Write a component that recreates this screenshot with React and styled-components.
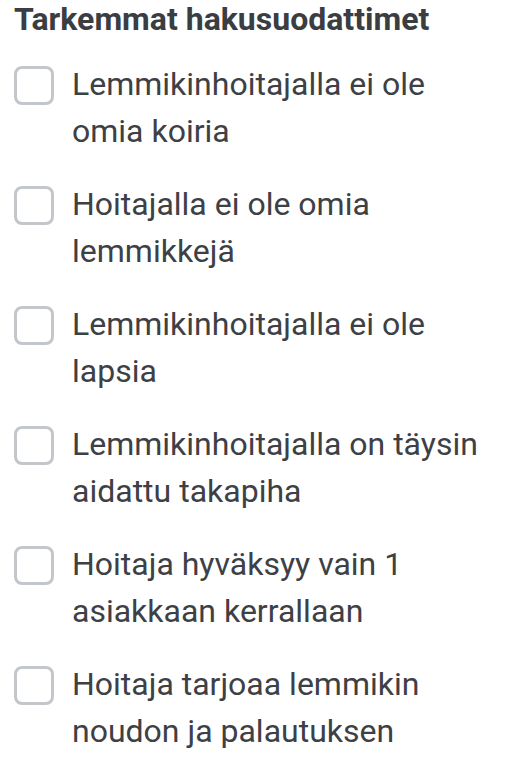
import React, { useState } from "react";
import styled, { createGlobalStyle } from "styled-components";

const filters = [
  { id: "noDogs", label: "Lemmikinhoitajalla ei ole omia koiria" },
  { id: "noPets", label: "Hoitajalla ei ole omia lemmikkejä" },
  { id: "noKids", label: "Lemmikinhoitajalla ei ole lapsia" },
  { id: "fencedYard", label: "Lemmikinhoitajalla on täysin aidattu takapiha" },
  { id: "oneClient", label: "Hoitaja hyväksyy vain 1 asiakkaan kerrallaan" },
  { id: "pickup", label: "Hoitaja tarjoaa lemmikin noudon ja palautuksen" },
];

const App = () => {
  const [checked, setChecked] = useState({});

  const toggle = (id) => setChecked({ ...checked, [id]: !checked[id] });

  return (
    <>
      <GlobalStyle />
      <Panel>
        <Title>Tarkemmat hakusuodattimet</Title>
        <List>
          {filters.map((f) => (
            <Item key={f.id} onClick={() => toggle(f.id)}>
              <Box $checked={!!checked[f.id]} />
              <Label>{f.label}</Label>
            </Item>
          ))}
        </List>
      </Panel>
    </>
  );
};

export default App;

const GlobalStyle = createGlobalStyle`
  body {
    margin: 0;
    background: #ffffff;
    font-family: Roboto, "Noto Sans", sans-serif;
    color: #3d4045;
  }
`;

const Panel = styled.div`
  width: 510px;
  box-sizing: border-box;
  padding: 0 14px;
`;

const Title = styled.h2`
  margin: 0;
  font-size: 32px;
  line-height: 38px;
  font-weight: 700;
  color: #3a3d42;
`;

const List = styled.div`
  display: flex;
  flex-direction: column;
  gap: 26px;
  padding-top: 23px;
`;

const Item = styled.label`
  display: flex;
  align-items: flex-start;
  gap: 18px;
  cursor: pointer;
`;

const Box = styled.span`
  flex: none;
  width: 34px;
  height: 33px;
  margin-top: 5px;
  border: 3px solid #c3c7cb;
  border-radius: 8px;
  background: ${(p) => (p.$checked ? "#3d4045" : "#fff")};
`;

const Label = styled.span`
  font-size: 32px;
  line-height: 47px;
  color: #3d4045;
`;
